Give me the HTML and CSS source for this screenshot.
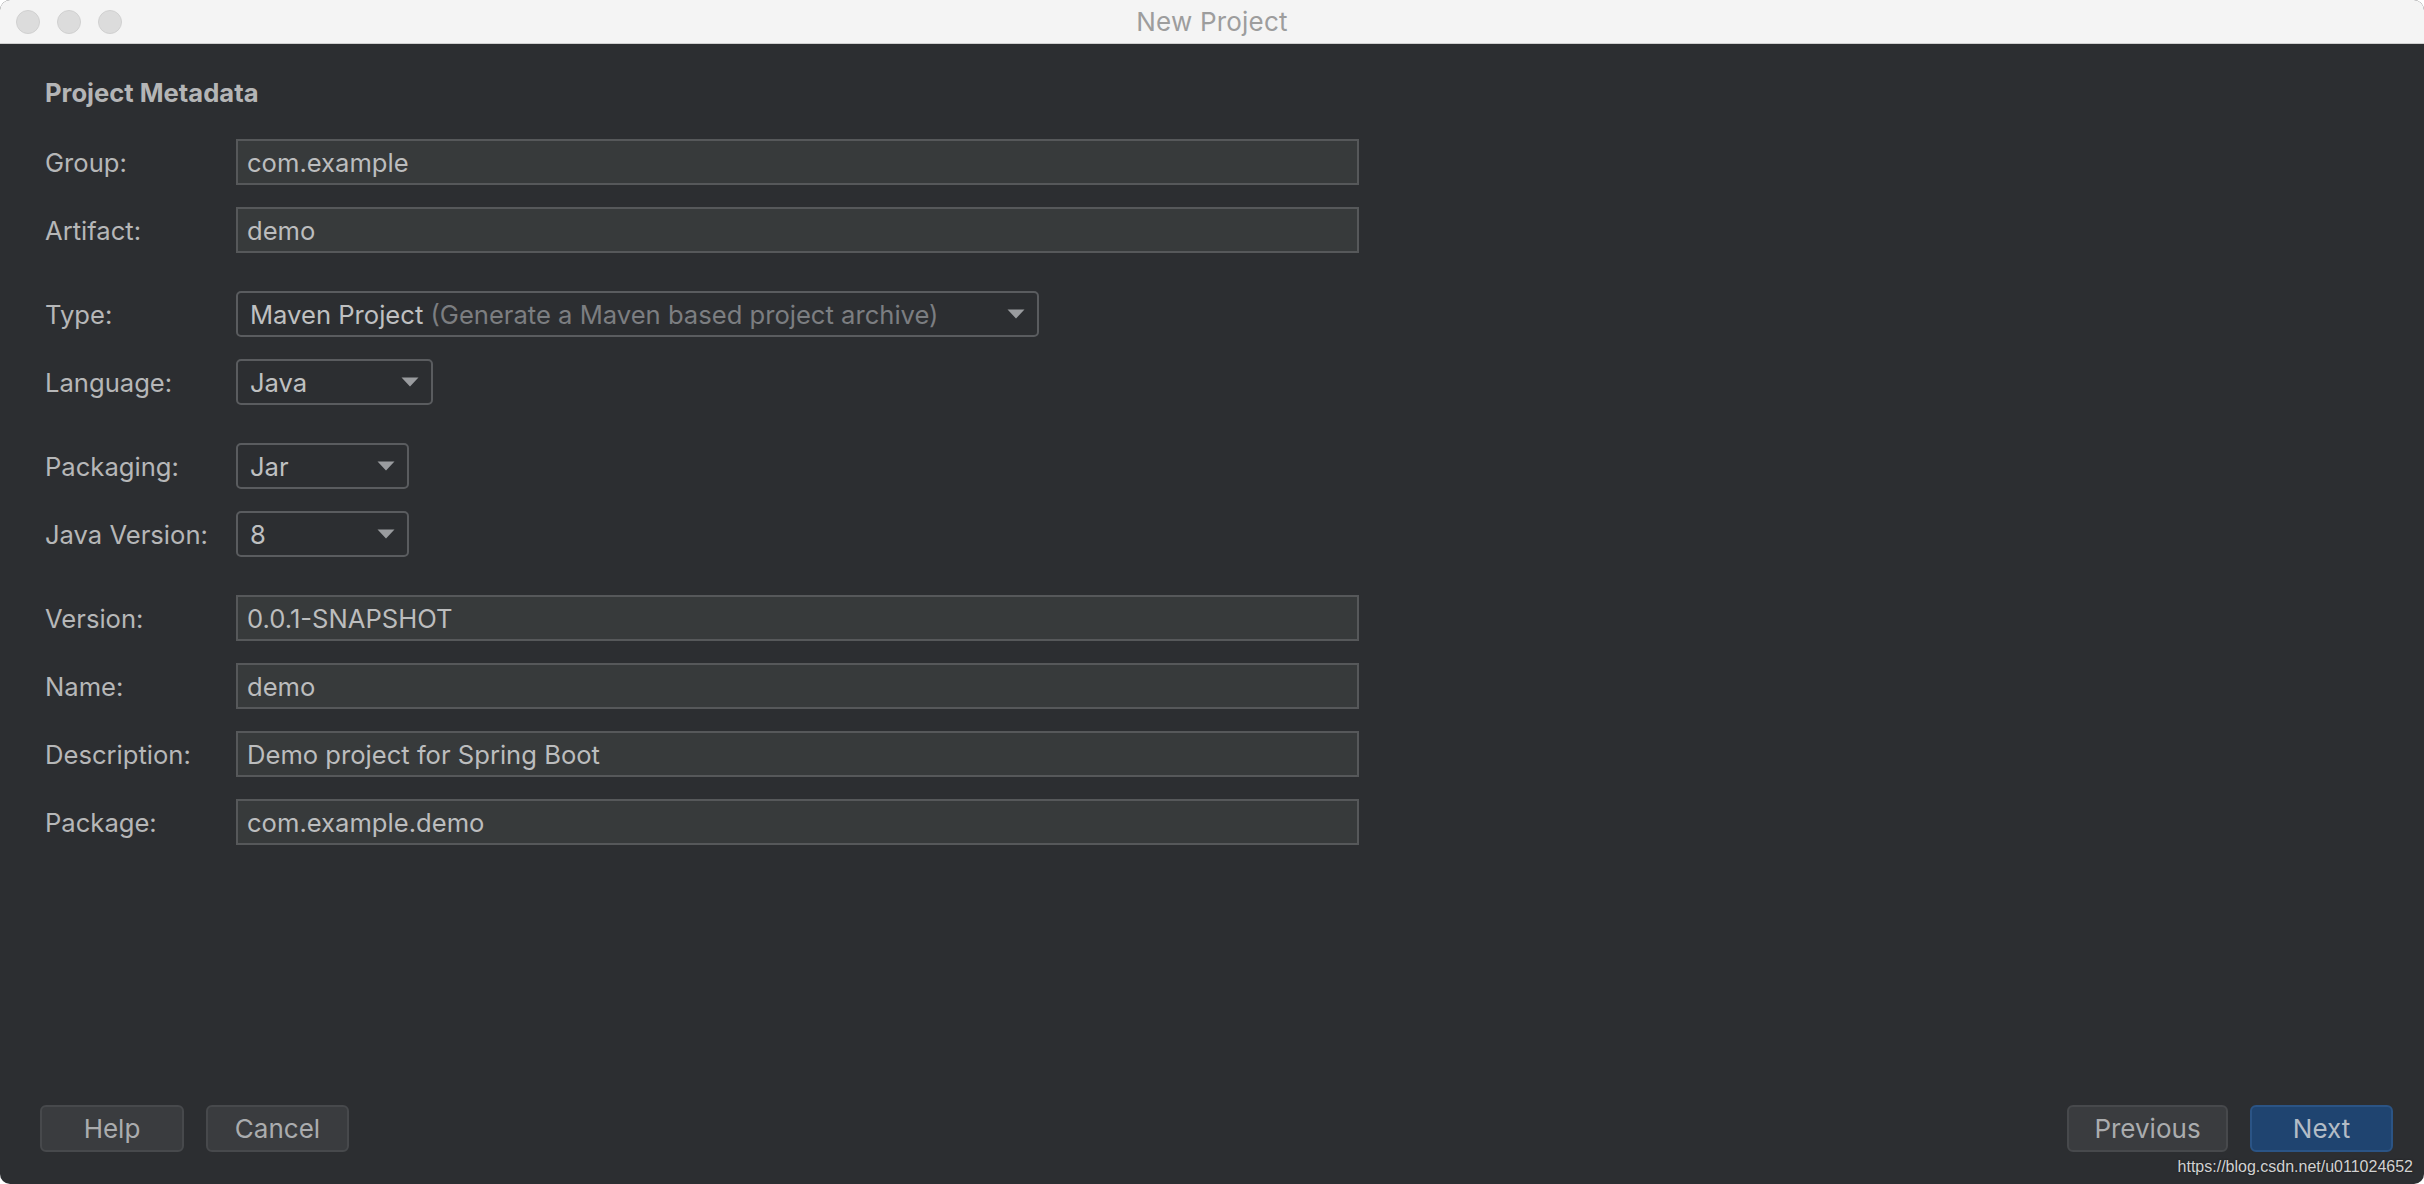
FILE: index.html
```html
<!DOCTYPE html>
<html lang="en">
<head>
    <meta charset="UTF-8">
    <meta name="viewport" content="width=device-width, initial-scale=1.0">
    <title>New Project</title>
    <link rel="stylesheet" href="styles.css">
</head>
<body>
    <div class="window">
        <div class="titlebar">
            <div class="lights">
                <span class="light"></span>
                <span class="light"></span>
                <span class="light"></span>
            </div>
            <div class="title">New Project</div>
            <div></div>
        </div>

        <div class="content">
            <div class="form">
                <div class="heading">Project Metadata</div>

                <div class="group">
                    <div class="row">
                        <div class="label">Group:</div>
                        <div class="field">com.example</div>
                    </div>
                    <div class="row">
                        <div class="label">Artifact:</div>
                        <div class="field">demo</div>
                    </div>
                </div>

                <div class="group">
                    <div class="row">
                        <div class="label">Type:</div>
                        <div class="combo combo-type">
                            <span>Maven Project <span class="hint">(Generate a Maven based project archive)</span></span>
                            <svg class="arrow" width="18" height="10" viewBox="0 0 18 10"><path d="M0.5 0.5h17L9 9.5z" fill="#9a9c9f"/></svg>
                        </div>
                    </div>
                    <div class="row">
                        <div class="label">Language:</div>
                        <div class="combo combo-lang">
                            <span>Java</span>
                            <svg class="arrow" width="18" height="10" viewBox="0 0 18 10"><path d="M0.5 0.5h17L9 9.5z" fill="#9a9c9f"/></svg>
                        </div>
                    </div>
                </div>

                <div class="group">
                    <div class="row">
                        <div class="label">Packaging:</div>
                        <div class="combo combo-small">
                            <span>Jar</span>
                            <svg class="arrow" width="18" height="10" viewBox="0 0 18 10"><path d="M0.5 0.5h17L9 9.5z" fill="#9a9c9f"/></svg>
                        </div>
                    </div>
                    <div class="row">
                        <div class="label">Java Version:</div>
                        <div class="combo combo-small">
                            <span>8</span>
                            <svg class="arrow" width="18" height="10" viewBox="0 0 18 10"><path d="M0.5 0.5h17L9 9.5z" fill="#9a9c9f"/></svg>
                        </div>
                    </div>
                </div>

                <div class="group">
                    <div class="row">
                        <div class="label">Version:</div>
                        <div class="field">0.0.1-SNAPSHOT</div>
                    </div>
                    <div class="row">
                        <div class="label">Name:</div>
                        <div class="field">demo</div>
                    </div>
                    <div class="row">
                        <div class="label">Description:</div>
                        <div class="field">Demo project for Spring Boot</div>
                    </div>
                    <div class="row">
                        <div class="label">Package:</div>
                        <div class="field">com.example.demo</div>
                    </div>
                </div>
            </div>

            <div class="buttons">
                <div class="button-group">
                    <button class="btn btn-help">Help</button>
                    <button class="btn btn-cancel">Cancel</button>
                </div>
                <div class="button-group">
                    <button class="btn btn-prev">Previous</button>
                    <button class="btn btn-next">Next</button>
                </div>
            </div>
        </div>

        <div class="watermark">https://blog.csdn.net/u011024652</div>
    </div>
</body>
</html>
```

FILE: styles.css
```css
html, body {
    margin: 0;
    padding: 0;
    background-color: #ffffff;
}
body {
    font-family: Inter, "Noto Sans", sans-serif;
    font-size: 25.6px;
    color: #b8b9ba;
}
.window {
    position: relative;
    width: 2424px;
    height: 1184px;
    background-color: #2c2e31;
    border-radius: 10px;
    overflow: hidden;
    display: flex;
    flex-direction: column;
}
.titlebar {
    height: 43px;
    background-color: #f4f4f4;
    border-bottom: 1px solid #cfcfcf;
    display: grid;
    grid-template-columns: 1fr auto 1fr;
    align-items: center;
}
.lights {
    display: flex;
    gap: 17px;
    padding-left: 16px;
}
.light {
    width: 22px;
    height: 22px;
    border-radius: 50%;
    background-color: #dcdcdc;
    border: 1px solid #d0d0d0;
}
.title {
    font-size: 26px;
    color: #9d9d9d;
    letter-spacing: 0.2px;
}
.content {
    flex: 1;
    display: flex;
    flex-direction: column;
    justify-content: space-between;
    padding: 33px 31px 32px 45px;
}
.heading {
    font-weight: bold;
    line-height: 32px;
    color: #b4b5b6;
    margin-bottom: 30px;
}
.group {
    display: flex;
    flex-direction: column;
    gap: 22px;
    margin-bottom: 38px;
}
.row {
    display: flex;
    align-items: center;
    height: 46px;
}
.label {
    width: 191px;
    flex-shrink: 0;
    color: #b6b7b8;
}
.field {
    box-sizing: border-box;
    width: 1123px;
    height: 46px;
    display: flex;
    align-items: center;
    padding-left: 9px;
    background-color: #373a3b;
    border: 2px solid #56585a;
    color: #bcbdbe;
}
.combo {
    box-sizing: border-box;
    height: 46px;
    display: flex;
    align-items: center;
    justify-content: space-between;
    padding: 0 12px 0 12px;
    border: 2px solid #5a5c5f;
    border-radius: 5px;
    color: #bfc0c1;
}
.combo-type {
    width: 803px;
}
.combo-lang {
    width: 197px;
}
.combo-small {
    width: 173px;
}
.hint {
    color: #7c7e81;
}
.arrow {
    flex-shrink: 0;
}
.buttons {
    display: flex;
    justify-content: space-between;
    margin-left: -5px;
}
.button-group {
    display: flex;
    gap: 22px;
}
.btn {
    box-sizing: border-box;
    height: 47px;
    font-family: Inter, "Noto Sans", sans-serif;
    font-size: 26px;
    color: #aaacae;
    background-color: #3a3c3f;
    border: 2px solid #47494c;
    border-radius: 6px;
    padding: 0;
}
.btn-help {
    width: 144px;
}
.btn-cancel {
    width: 143px;
}
.btn-prev {
    width: 161px;
}
.btn-next {
    width: 143px;
    color: #b3bcc6;
    background-color: #1f4470;
    border-color: #2b5485;
}
.watermark {
    position: absolute;
    right: 11px;
    bottom: 7px;
    font-family: "Liberation Sans", Arial, sans-serif;
    font-size: 16px;
    line-height: 20px;
    color: #d2d2d2;
    text-shadow: 0 0 2px rgba(0, 0, 0, 0.5);
}
```
